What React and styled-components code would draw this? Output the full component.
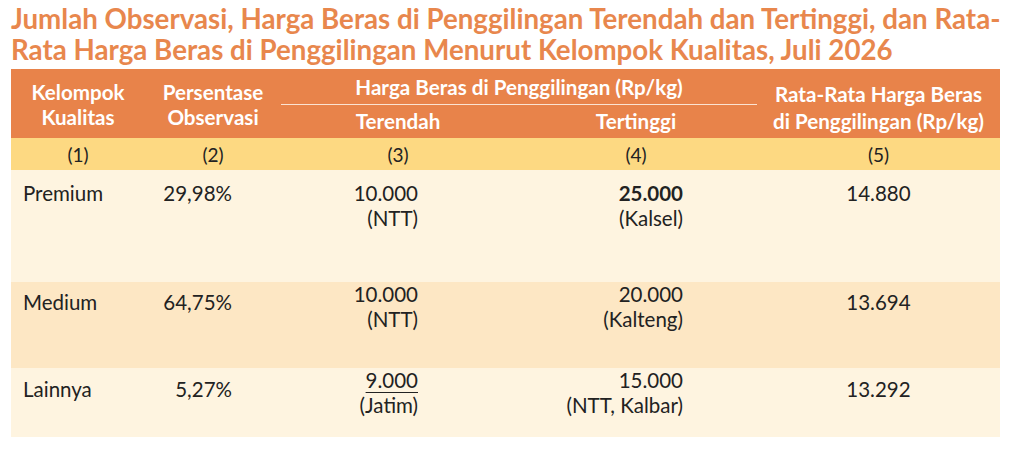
import React from "react"
import styled, { createGlobalStyle } from "styled-components"

const GlobalStyle = createGlobalStyle`
  body {
    margin: 0;
    background: #ffffff;
    font-family: "Lato", "Noto Sans", sans-serif;
  }
`

const Page = styled.div`
  width: 1024px;
  height: 459px;
  padding: 3px 24px 0 11px;
  box-sizing: border-box;
`

const Title = styled.h1`
  margin: 0 0 4px;
  font-size: 27.7px;
  line-height: 31px;
  font-weight: 700;
  color: #e8874d;
  white-space: nowrap;
`

const cols = "134px 136px 234px 242px 243px"

const Head = styled.div`
  display: grid;
  grid-template-columns: ${cols};
  grid-template-rows: 36px 33px;
  background: #e8834a;
  color: #ffffff;
  font-weight: 700;
  font-size: 20.6px;
  line-height: 25px;
`

const HeadCell = styled.div`
  grid-row: ${p => p.$rows || "auto"};
  grid-column: ${p => p.$cols || "auto"};
  display: flex;
  flex-direction: column;
  align-items: center;
  justify-content: ${p => p.$justify || "center"};
  padding-top: ${p => p.$top || 0}px;
  line-height: ${p => p.$lh || 25}px;
  text-align: center;
`

const GroupHead = styled.div`
  grid-column: 3 / 5;
  grid-row: 1;
  border-bottom: 1.5px solid #fbe3d2;
  display: flex;
  justify-content: center;
  align-items: center;
  padding-top: 2px;
`

const NumRow = styled.div`
  display: grid;
  grid-template-columns: ${cols};
  height: 32px;
  background: #fdd982;
  color: #222222;
  font-size: 19px;
  align-items: center;
  text-align: center;
`

const Row = styled.div`
  display: grid;
  grid-template-columns: ${cols};
  height: ${p => p.$h}px;
  padding-top: ${p => p.$pad}px;
  box-sizing: border-box;
  background: ${p => p.$bg};
  color: #222222;
  font-size: 20.5px;
  line-height: 25px;
  align-items: start;
`

const Cell = styled.div`
  margin-top: ${p => p.$shift || 0}px;
  text-align: ${p => p.$align || "left"};
  padding-left: ${p => p.$left || 0}px;
  padding-right: ${p => p.$right || 0}px;
`

const Bold = styled.span`
  font-weight: 700;
`

const Under = styled.span`
  text-decoration: underline;
  text-decoration-thickness: 1px;
  text-underline-offset: 4px;
`

const rows = [
  {
    name: "Premium", pct: "29,98%", low: "10.000", lowReg: "(NTT)",
    high: <Bold>25.000</Bold>, highReg: "(Kalsel)", avg: "14.880",
    h: 112, pad: 11, shift: 0, bg: "#fef4e0",
  },
  {
    name: "Medium", pct: "64,75%", low: "10.000", lowReg: "(NTT)",
    high: "20.000", highReg: "(Kalteng)", avg: "13.694",
    h: 86, pad: 0, shift: 8, bg: "#fde7c4",
  },
  {
    name: "Lainnya", pct: "5,27%", low: <Under>9.000</Under>, lowReg: "(Jatim)",
    high: "15.000", highReg: "(NTT, Kalbar)", avg: "13.292",
    h: 69, pad: 0, shift: 9, bg: "#fef4e0",
  },
]

const App = () => (
  <Page>
    <GlobalStyle />
    <Title>
      Jumlah Observasi, Harga Beras di Penggilingan Terendah dan Tertinggi, dan Rata-
      <br />
      Rata Harga Beras di Penggilingan Menurut Kelompok Kualitas, Juli 2026
    </Title>
    <Head>
      <HeadCell $rows="1 / 3" $cols="1" $justify="flex-start" $top={11}>
        <span>Kelompok</span>
        <span>Kualitas</span>
      </HeadCell>
      <HeadCell $rows="1 / 3" $cols="2" $justify="flex-start" $top={11}>
        <span>Persentase</span>
        <span>Observasi</span>
      </HeadCell>
      <GroupHead>Harga Beras di Penggilingan (Rp/kg)</GroupHead>
      <HeadCell $rows="2" $cols="3">Terendah</HeadCell>
      <HeadCell $rows="2" $cols="4">Tertinggi</HeadCell>
      <HeadCell $rows="1 / 3" $cols="5" $justify="flex-start" $top={12} $lh={27}>
        <span>Rata-Rata Harga Beras</span>
        <span>di Penggilingan (Rp/kg)</span>
      </HeadCell>
    </Head>
    <NumRow>
      <span>(1)</span>
      <span>(2)</span>
      <span>(3)</span>
      <span>(4)</span>
      <span>(5)</span>
    </NumRow>
    {rows.map(r => (
      <Row key={r.name} $h={r.h} $pad={r.pad} $bg={r.bg}>
        <Cell $shift={r.shift} $left={12}>{r.name}</Cell>
        <Cell $shift={r.shift} $align="right" $right={49}>{r.pct}</Cell>
        <Cell $align="right" $right={97}>
          {r.low}
          <br />
          {r.lowReg}
        </Cell>
        <Cell $align="right" $right={74}>
          {r.high}
          <br />
          {r.highReg}
        </Cell>
        <Cell $shift={r.shift} $align="center">{r.avg}</Cell>
      </Row>
    ))}
  </Page>
)

export default App
